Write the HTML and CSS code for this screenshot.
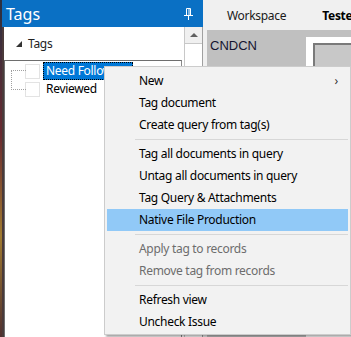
FILE: index.html
```html
<!DOCTYPE html>
<html lang="en">
<head>
  <meta charset="UTF-8">
  <title>Tags</title>
  <link rel="stylesheet" href="styles.css">
</head>
<body>
  <div class="screen">
    <div class="desk"></div>

    <!-- Tags tool pane -->
    <div class="pane">
      <div class="pane-head">
        <span class="pane-title">Tags</span>
        <svg class="pin" width="9" height="12" viewBox="0 0 9 12">
          <path d="M2.5 0.5h4v7h-4z M0 7.5h9 M4.5 8v4" fill="none" stroke="#fff" stroke-width="1"/>
          <path d="M5 1v6" stroke="#fff" stroke-width="1"/>
        </svg>
      </div>
      <div class="pane-body">
        <div class="pane-content">
          <div class="group"><span class="tri"></span>Tags</div>
          <div class="tree">
            <div class="lines"></div>
            <div class="node">
              <span class="check"></span>
              <span class="label selected">Need Follow Up</span>
            </div>
            <div class="node">
              <span class="check"></span>
              <span class="label">Reviewed</span>
            </div>
          </div>
        </div>
        <div class="vscroll">
          <div class="scroll-up"><span class="arrow"></span></div>
          <div class="scroll-track"></div>
        </div>
      </div>
    </div>

    <div class="split"></div>

    <!-- Workspace -->
    <div class="work">
      <div class="tabs">
        <span class="tab">Workspace</span>
        <span class="tab active">Teste</span>
      </div>
      <div class="canvas">
        <div class="caption">CNDCN</div>
        <div class="panel"><div class="field"></div></div>
      </div>
    </div>

    <!-- Context menu -->
    <ul class="menu">
      <li class="item">New<span class="more">&#x203A;</span></li>
      <li class="item">Tag document</li>
      <li class="item">Create query from tag(s)</li>
      <li class="sep"></li>
      <li class="item">Tag all documents in query</li>
      <li class="item">Untag all documents in query</li>
      <li class="item">Tag Query &amp; Attachments</li>
      <li class="item hover">Native File Production</li>
      <li class="sep"></li>
      <li class="item disabled">Apply tag to records</li>
      <li class="item disabled">Remove tag from records</li>
      <li class="sep"></li>
      <li class="item">Refresh view</li>
      <li class="item">Uncheck Issue</li>
    </ul>
  </div>
</body>
</html>
```

FILE: styles.css
```css
body {
  margin: 0;
  font-family: "Noto Sans", "Open Sans", sans-serif;
  font-size: 12px;
  letter-spacing: -0.3px;
  color: #000;
  background-color: #f0f0f0;
}

.screen {
  position: relative;
  display: flex;
  width: 351px;
  height: 337px;
  overflow: hidden;
}

.desk {
  width: 2px;
  background: linear-gradient(#2a3040, #6a2a30 40%, #a07a30 70%, #503030);
}

/* Tags pane */
.pane {
  width: 201px;
  display: flex;
  flex-direction: column;
}

.pane-head {
  height: 27px;
  display: flex;
  align-items: center;
  justify-content: space-between;
  padding: 0 10px 0 4px;
  background-color: #0a70c4;
  color: #fff;
}

.pane-title {
  font-size: 16px;
  letter-spacing: 0;
}

.pin {
  margin-top: 1px;
}

.pane-body {
  flex: 1;
  display: flex;
  background-color: #fff;
  border-left: 2px solid #4a3a3a;
}

.pane-content {
  flex: 1;
  display: flex;
  flex-direction: column;
}

.group {
  height: 33px;
  display: flex;
  align-items: center;
  padding-left: 12px;
  color: #222;
}

.tri {
  width: 0;
  height: 0;
  margin-right: 6px;
  border-left: 6px solid transparent;
  border-bottom: 6px solid #333;
}

.tree {
  position: relative;
  flex: 1;
  margin-right: 2px;
  padding-top: 1px;
  border-top: 1px solid #6e6e6e;
  border-left: 1px solid #6e6e6e;
  border-right: 1px solid #8a8a8a;
}

.lines {
  position: absolute;
  left: 6px;
  top: 9px;
  width: 14px;
  height: 18px;
  border: 1px dotted #a0a0a0;
  border-right: none;
}

.node {
  height: 18px;
  display: flex;
  align-items: center;
  padding-left: 20px;
}

.check {
  width: 13px;
  height: 13px;
  border: 1px solid #e3e3e3;
  background-color: #fff;
  margin-right: 3px;
}

.label {
  padding: 0 2px;
  line-height: 16px;
  border: 1px solid transparent;
}

.label.selected {
  background-color: #0078d7;
  color: #fff;
  border: 1px dotted #000;
}

.vscroll {
  width: 17px;
  display: flex;
  flex-direction: column;
  border-left: 1px solid #c8c8c8;
  border-right: 1px solid #a0a0a0;
}

.scroll-up {
  height: 16px;
  display: flex;
  align-items: center;
  justify-content: center;
  background-color: #f0f0f0;
  border-bottom: 1px solid #c8c8c8;
}

.arrow {
  width: 0;
  height: 0;
  border-left: 4px solid transparent;
  border-right: 4px solid transparent;
  border-bottom: 4px solid #606060;
}

.scroll-track {
  flex: 1;
  background-color: #fff;
}

.split {
  width: 4px;
  background-color: #f0f0f0;
}

/* Workspace */
.work {
  flex: 1;
  display: flex;
  flex-direction: column;
  min-width: 0;
}

.tabs {
  height: 30px;
  display: flex;
  align-items: center;
  padding-left: 20px;
  gap: 36px;
  white-space: nowrap;
  background-color: #f0f0f0;
}

.tab {
  color: #1a1a1a;
}

.tab.active {
  font-weight: bold;
  color: #000;
}

.canvas {
  flex: 1;
  display: flex;
  background-color: #c0c0c0;
}

.caption {
  width: 96px;
  padding: 8px 0 0 3px;
  font-family: "Liberation Sans", Arial, sans-serif;
  font-size: 13px;
  letter-spacing: 0;
  color: #141430;
}

.panel {
  flex: 1;
  margin-top: 7px;
  padding: 6px 0 0 7px;
  background-color: #fff;
}

.field {
  height: 40px;
  background-color: #c8c8c8;
  border-top: 2px solid #7a7a7a;
  border-left: 2px solid #7a7a7a;
}

/* Context menu */
.menu {
  position: absolute;
  left: 104px;
  top: 66px;
  width: 241px;
  margin: 0;
  padding: 3px 2px 1px;
  list-style: none;
  background-color: #f2f2f2;
  border: 1px solid #cccccc;
  box-shadow: 2px 2px 2px rgba(0, 0, 0, 0.35);
}

.item {
  position: relative;
  height: 22px;
  line-height: 22px;
  padding-left: 32px;
  white-space: nowrap;
}

.item.hover {
  background-color: #91c9f7;
}

.item.disabled {
  color: #6d6d6d;
}

.more {
  position: absolute;
  right: 10px;
  top: 0;
  color: #333;
}

.sep {
  height: 1px;
  margin: 3px 0 3px 28px;
  background-color: #d7d7d7;
}
```
